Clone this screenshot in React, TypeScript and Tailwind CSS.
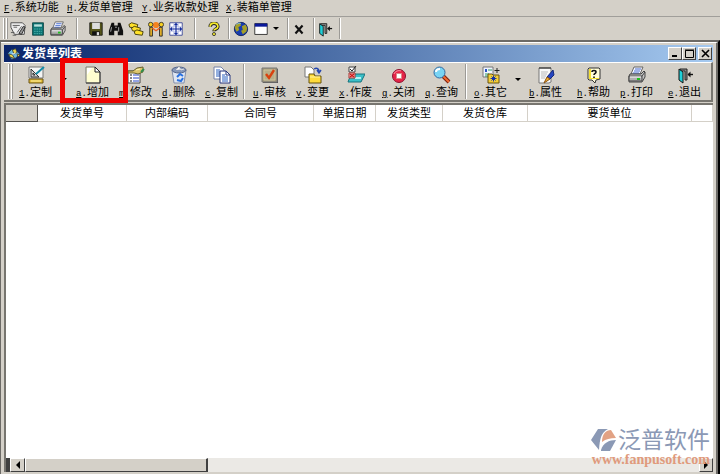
import type { ReactNode } from "react";

function Icon({ children, size = 18 }: { children: ReactNode; size?: 14 | 16 | 18 }) {
  return (
    <svg width={size} height={size} viewBox="0 0 18 18" className="shrink-0" aria-hidden="true">
      {children}
    </svg>
  );
}

// Icons shared by both toolbars
const printer = (
  <>
    <path d="M6 1h9l-3 7H3z" fill="#f4f6ff" stroke="#666" />
    <path d="M7 3h6M6 5h6M5 7h6" stroke="#4a6fd0" />
    <path d="M2 8h11l3-3 1 1v5l-3 5H1v-6z" fill="#c4c4c4" stroke="#444" />
    <path d="M1 10h13v5H1z" fill="#b0b0b0" stroke="#444" />
    <path d="M2 11h11" stroke="#fff" />
    <path d="M9 13h3" stroke="#1fc01f" strokeWidth="2" />
    <path d="M14 10l3-4" stroke="#444" />
  </>
);

const door = (
  <>
    <path d="M4 3h7v11H9V5H4z" fill="#8c8c8c" stroke="#222" />
    <path d="M3 3l4 3v11l-4-3z" fill="#20d0d8" stroke="#111" />
    <path d="M12 8.500h5" stroke="#111" strokeWidth="1.400" />
    <path d="M11.500 8.500l3-3v6z" fill="#111" />
  </>
);

const icons = {
  design: (
    <>
      <path d="M2 1h14v11H2z" fill="#f4f4f4" stroke="#777" />
      <path d="M4 3l8 8H4zM6 7v2h2z" fill="#cfcfcf" fillRule="evenodd" stroke="#333" />
      <path d="M9 8l8-7" stroke="#158ca8" strokeWidth="2" />
      <path d="M2 13h14v4H2z" fill="#e2bd3a" stroke="#6b5515" />
      <path d="M4 15h10" stroke="#fff0a0" />
    </>
  ),
  page: (
    <>
      <path d="M2 1h9l5 5v11H2z" fill="#fffed0" stroke="#777" />
      <path d="M3 2h5L3 9z" fill="#fff" />
      <path d="M11 1v5h5z" fill="#fff" stroke="#222" />
      <path d="M16 6v11H2" stroke="#333" fill="none" />
    </>
  ),
  edit: (
    <>
      <path d="M1 5h12v12H1z" fill="#fff" stroke="#444" />
      <path d="M3 9h2M3 12h2M3 15h2" stroke="#111" />
      <path d="M6 9h6M6 12h6M6 15h6" stroke="#2846c8" />
      <path d="M1 5h5l4-3 6-1v5l-5 2-4-1H1z" fill="#dcc56c" stroke="#67602c" />
      <path d="M9 4l4-1" stroke="#fff6b0" />
      <path d="M14 6l3-3" stroke="#2f8c4c" strokeWidth="2" />
    </>
  ),
  trash: (
    <>
      <path d="M2 4h14l-2 13H4z" fill="#dfe6f2" stroke="#8490ac" />
      <ellipse cx="9" cy="4" rx="7" ry="3" fill="#8798b8" stroke="#55658a" />
      <path d="M6 4l3-3 2 3 3-1" fill="#fff" stroke="#ddd" />
      <path d="M7 11l3-3 3 2M13 12l-2 3-4-1" stroke="#2870e0" strokeWidth="2" fill="none" />
    </>
  ),
  copy: (
    <>
      <path d="M1 1h7l3 3v9H1z" fill="#fff" stroke="#7482a8" />
      <path d="M3 4h4M3 6h5M3 8h5M3 10h5" stroke="#2860c0" />
      <path d="M7 5h6l4 4v8H7z" fill="#fff" stroke="#24347c" />
      <path d="M13 5v4h4" fill="none" stroke="#24347c" />
      <path d="M9 9h3M9 11h6M9 13h6M9 15h6" stroke="#2860c0" />
    </>
  ),
  audit: (
    <>
      <path d="M2 3h15v14H2z" fill="#555" />
      <path d="M1 2h15v14H1z" fill="#a59c7c" stroke="#777" />
      <path d="M3 4h11v10H3z" fill="#b8ae88" stroke="#ccc49f" />
      <path d="M5 8l3 4 5-8" fill="none" stroke="#d9420e" strokeWidth="2.400" />
    </>
  ),
  change: (
    <>
      <path d="M1 1h6l3 3v7H1z" fill="#fff" stroke="#777" />
      <path d="M10 3c3-2 5 0 5 3M13 4l2 3 2-3" fill="none" stroke="#2447b0" strokeWidth="1.500" />
      <path d="M5 8h5l1 2h6v7H5z" fill="#ffdb3b" stroke="#66520c" />
      <path d="M6 11h10" stroke="#fff4a0" />
    </>
  ),
  discard: (
    <>
      <path d="M4 8h14l-4 8H1z" fill="#3cc0c8" stroke="#16727c" />
      <path d="M8 12h6" stroke="#b6f2f4" strokeWidth="2" />
      <path d="M2 1h6v5H2z" fill="#fff" stroke="#444" />
      <path d="M3 3l2 2 4-5" stroke="#222" fill="none" />
      <path d="M2 7h6v5H2z" fill="#f6caca" stroke="#a33" />
      <path d="M3 8l4 3M7 8l-4 3" stroke="#d01818" strokeWidth="1.500" />
    </>
  ),
  stop: (
    <>
      <circle cx="9" cy="10" r="6.500" fill="#e52448" stroke="#8c1230" />
      <path d="M4 8c1-3 5-4 7-3" stroke="#ff98a8" fill="none" />
      <path d="M6.500 7.500h5v5h-5z" fill="#fff" stroke="#d88" />
    </>
  ),
  search: (
    <>
      <path d="M10 10l6 6" stroke="#7a2010" strokeWidth="4" />
      <path d="M10 10l6 6" stroke="#f26a30" strokeWidth="2" />
      <circle cx="6.500" cy="6.500" r="5.500" fill="#78d4f4" stroke="#3468a0" />
      <path d="M3 6c0-2 2-3 4-3" stroke="#fff" strokeWidth="2" fill="none" />
    </>
  ),
  other: (
    <>
      <path d="M1 1h10v10H1z" fill="#f0f4ff" stroke="#777" />
      <path d="M3 3h2v3H3z" fill="#2b55c8" />
      <path d="M6 4h4M3 8h4M3 10h3" stroke="#2f9c5c" />
      <path d="M15 2v5M12.500 4.500h5" stroke="#222" />
      <path d="M6 8h4l1 1h6v8H6z" fill="#f4ce38" stroke="#69540e" />
      <path d="M11.500 9.500v6M8.500 12.500h6M9.500 10.500l4 4M13.500 10.500l-4 4" stroke="#1434a4" />
    </>
  ),
  props: (
    <>
      <path d="M2 2h12v14l-2 1H2z" fill="#fafafa" stroke="#777" />
      <path d="M3 1v2M5 1v2M7 1v2M9 1v2M11 1v2M13 1v2" stroke="#222" />
      <path d="M4 6h7M4 8h6M4 10h5M4 12h4" stroke="#bbb" />
      <path d="M16 4l1 5-4 4-3-2z" fill="#2444c0" stroke="#152a78" />
      <path d="M10 11l3 2-6 4z" fill="#f0b030" stroke="#8a5010" />
    </>
  ),
  help: (
    <>
      <path d="M4 2h10l1 1v10l-4 1-1 3-3-3H4l-1-1V3z" fill="#fffcd8" stroke="#333" />
      <path d="M4 3h2v10H4zM5 12h9v1H5z" fill="#f4df32" />
      <path d="M7 6c0-2 4-2 4 0 0 2-2 1-2 3M9 10.500v1.500" fill="none" stroke="#111" strokeWidth="1.600" />
    </>
  ),
  form: (
    <>
      <path d="M1 2h13l3 3-1 10H5L1 7z" fill="#eee" stroke="#444" />
      <path d="M3 5h8M4 7h4M8 13l5-7" stroke="#555" />
      <path d="M10 14l5-8 2 1-4 8z" fill="#999" stroke="#222" />
      <path d="M1 13h4M3 16h4" stroke="#555" />
    </>
  ),
  calculator: (
    <>
      <path d="M2 1h14v16H2z" fill="#0c7474" stroke="#073c3c" />
      <path d="M4 3h10v3H4z" fill="#b8e0dc" />
      <path d="M4 9h10M4 12h10M4 15h10" stroke="#5bc0ba" strokeDasharray="2 1" />
    </>
  ),
  save: (
    <>
      <path d="M1 1h16v16H3l-2-2z" fill="#55551a" stroke="#111" />
      <path d="M4 1h10v8H4z" fill="#ddd" />
      <path d="M4 12h10v5H4z" fill="#111" />
      <path d="M10 13h3v4h-3z" fill="#ddd" />
    </>
  ),
  find: (
    <>
      <path d="M4 2h3v3h4V2h3l3 9v5h-6v-5H7v5H1v-5z" fill="#111" />
      <path d="M4 7l-1 5M12 7v5M8 7h2" stroke="#bbb" />
    </>
  ),
  cards: (
    <>
      <path d="M1 4l3-2 7 2-1 4-8-1z" fill="#ffe12a" stroke="#3c3608" />
      <path d="M4 8l3-2 7 2-1 4-8-1z" fill="#ffe12a" stroke="#3c3608" />
      <path d="M7 12l3-2 7 2-1 4-8-1z" fill="#ffe12a" stroke="#3c3608" />
    </>
  ),
  people: (
    <>
      <path d="M2 7h3v10H2zM13 7h3v10h-3z" fill="#e8b428" stroke="#222" />
      <path d="M5 8l4 3 4-3" stroke="#f06020" strokeWidth="1.500" fill="none" />
      <circle cx="9" cy="4.500" r="3.500" fill="#f58220" />
      <circle cx="3" cy="4" r="2.500" fill="#f8d020" stroke="#333" />
      <circle cx="15" cy="4" r="2.500" fill="#f8d020" stroke="#333" />
    </>
  ),
  move: (
    <>
      <path d="M1 1h16v16H1z" fill="#fff" stroke="#20308c" />
      <path d="M1 6h16M1 12h16M6 1v16M12 1v16" stroke="#b7c0e8" />
      <path
        d="M9 2v14M2 9h14M7 4l2-2 2 2M7 14l2 2 2-2M4 7L2 9l2 2M14 7l2 2-2 2"
        stroke="#122a9c"
        strokeWidth="1.500"
        fill="none"
      />
    </>
  ),
  question: (
    <>
      <path d="M4 6c0-6 10-6 10 0 0 3-5 3-5 6" fill="none" stroke="#222" strokeWidth="4.500" />
      <path d="M4 6c0-6 10-6 10 0 0 3-5 3-5 5" fill="none" stroke="#f4e92c" strokeWidth="2.200" />
      <circle cx="9" cy="15.500" r="2" fill="#f4e92c" stroke="#222" />
    </>
  ),
  globe: (
    <>
      <circle cx="9" cy="9" r="7.500" fill="#183cae" stroke="#10225c" />
      <path d="M3 4l5-2 1 3-3 2 1 3-3 2-2-4zM10 6l4-2 2 4-1 4-4 3-2-4 2-1z" fill="#a59f28" />
      <path d="M4 4c2-2 4-2 5-1" stroke="#8acbe8" fill="none" />
    </>
  ),
  window: (
    <>
      <path d="M1 2h16v14H1z" fill="#fff" stroke="#111" />
      <path d="M1 2h16v4H1z" fill="#0a189a" />
    </>
  ),
  cross: <path d="M5 5l8 9M13 5l-8 9" stroke="#111" strokeWidth="2.400" />,
  fish: (
    <>
      <path d="M1 8l5-5 5 1 5 4-4 6-6 2-3-4z" fill="#6cb8dc" stroke="#142850" />
      <path d="M7 4l4-2 2 5-4 2zM2 9l5 1 3 5-6-2zM13 9l4 1-3 3z" fill="#e8d74c" stroke="#333" />
      <path d="M6 9l5-1" stroke="#fff" />
    </>
  ),
  printer,
  door,
};

type IconName = keyof typeof icons;

type Action = { hotkey: string; label: string; icon: IconName };

const menus = [
  { hotkey: "F", label: "系统功能", width: "w-[63px]" },
  { hotkey: "H", label: "发货单管理", width: "w-[75px]" },
  { hotkey: "Y", label: "业务收款处理", width: "w-[84px]" },
  { hotkey: "X", label: "装箱单管理", width: "w-[75px]" },
];

const editActions: Action[] = [
  { hotkey: "m", label: "修改", icon: "edit" },
  { hotkey: "d", label: "删除", icon: "trash" },
  { hotkey: "c", label: "复制", icon: "copy" },
];

const flowActions: Action[] = [
  { hotkey: "u", label: "审核", icon: "audit" },
  { hotkey: "v", label: "变更", icon: "change" },
  { hotkey: "x", label: "作废", icon: "discard" },
  { hotkey: "g", label: "关闭", icon: "stop" },
  { hotkey: "q", label: "查询", icon: "search" },
];

const columns = [
  { label: "", width: "w-8" },
  { label: "发货单号", width: "w-[89px]" },
  { label: "内部编码", width: "w-[81px]" },
  { label: "合同号", width: "w-[106px]" },
  { label: "单据日期", width: "w-[62px]" },
  { label: "发货类型", width: "w-[67px]" },
  { label: "发货仓库", width: "w-[85px]" },
  { label: "要货单位", width: "w-[164px]" },
  { label: "", width: "" },
];

function Hotkey({ children }: { children: string }) {
  return (
    <span className="font-['Liberation_Mono',monospace] text-[9px]">
      <span className="underline">{children}</span>.
    </span>
  );
}

function Divider() {
  return <div className="w-[2px] shrink-0 self-stretch border-l border-[#9c9a96] bg-white" />;
}

function Grip() {
  return (
    <div className="flex shrink-0 gap-px self-stretch">
      <div className="w-[2px] border-r border-[#9c9a96] bg-white" />
      <div className="w-[2px] border-r border-[#9c9a96] bg-white" />
    </div>
  );
}

function Caret() {
  return <span className="block border-x-3 border-t-3 border-x-transparent border-t-black" />;
}

function SmallButton({ icon, label, size = 16 }: { icon: IconName; label: string; size?: 14 | 16 }) {
  return (
    <button aria-label={label} className="flex w-5 shrink-0 items-center justify-center">
      <Icon size={size}>{icons[icon]}</Icon>
    </button>
  );
}

function ToolButton({ hotkey, label, icon }: Action) {
  return (
    <button className="flex w-[43px] shrink-0 flex-col items-center gap-px pt-[2px]">
      <Icon>{icons[icon]}</Icon>
      <span className="leading-[14px] whitespace-nowrap">
        <Hotkey>{hotkey}</Hotkey>
        {label}
      </span>
    </button>
  );
}

function WindowButton({ label, children }: { label: string; children: ReactNode }) {
  return (
    <button
      aria-label={label}
      className="flex h-[13px] w-[14px] items-center justify-center border border-t-white border-r-[#404040] border-b-[#404040] border-l-white bg-[#d4d0c8]"
    >
      <svg width="9" height="9" viewBox="0 0 9 9" fill="none" stroke="#000">
        {children}
      </svg>
    </button>
  );
}

function MainToolbar() {
  return (
    <div className="flex h-6 items-center border-t border-[#a09e9a] px-[3px] py-px">
      <Grip />
      <div className="flex">
        <SmallButton icon="form" label="单据" />
        <SmallButton icon="calculator" label="计算器" size={14} />
        <SmallButton icon="printer" label="打印" />
      </div>
      <div className="ml-2 flex self-stretch">
        <Divider />
      </div>
      <div className="ml-2 flex">
        <SmallButton icon="save" label="保存" size={14} />
        <SmallButton icon="find" label="查找" />
        <SmallButton icon="cards" label="卡片" />
        <SmallButton icon="people" label="人员" />
        <SmallButton icon="move" label="移动" size={14} />
      </div>
      <div className="ml-2 flex self-stretch">
        <Divider />
      </div>
      <div className="ml-2 flex">
        <SmallButton icon="question" label="帮助" size={14} />
      </div>
      <div className="mr-px ml-1 flex self-stretch">
        <Divider />
      </div>
      <SmallButton icon="globe" label="网络" />
      <SmallButton icon="window" label="窗口" size={14} />
      <button aria-label="窗口列表" className="pr-2 pl-[2px]">
        <Caret />
      </button>
      <Divider />
      <SmallButton icon="cross" label="关闭" />
      <div className="ml-1 flex self-stretch">
        <Divider />
      </div>
      <SmallButton icon="door" label="退出" />
      <div className="ml-1 flex self-stretch">
        <Divider />
      </div>
    </div>
  );
}

function ListToolbar() {
  return (
    <div className="flex h-10 items-stretch border-t border-r-2 border-b-2 border-t-white border-r-[#77756f] border-b-[#77756f] bg-[#d4d0c8] py-px pl-1">
      <Grip />
      <div className="ml-px flex">
        <ToolButton hotkey="1" label="定制" icon="design" />
      </div>
      <button aria-label="定制选项" className="flex w-[14px] shrink-0 items-center justify-center pb-1">
        <Caret />
      </button>
      {/* highlighted action */}
      <div className="relative flex">
        <ToolButton hotkey="a" label="增加" icon="page" />
        <div className="pointer-events-none absolute -top-[6px] -right-[14px] -bottom-1 -left-[11px] z-10 border-5 border-[#f00000]" />
      </div>
      {editActions.map((action) => (
        <ToolButton key={action.label} {...action} />
      ))}
      <Divider />
      <div className="ml-[3px] flex">
        {flowActions.map((action) => (
          <ToolButton key={action.label} {...action} />
        ))}
      </div>
      <div className="mx-[2px] flex">
        <Divider />
      </div>
      <ToolButton hotkey="o" label="其它" icon="other" />
      <button aria-label="其它选项" className="flex w-3 shrink-0 items-center justify-center pb-1">
        <Caret />
      </button>
      <div className="flex gap-[5px]">
        <ToolButton hotkey="b" label="属性" icon="props" />
        <div className="flex">
          <ToolButton hotkey="h" label="帮助" icon="help" />
          <ToolButton hotkey="p" label="打印" icon="printer" />
        </div>
        <ToolButton hotkey="e" label="退出" icon="door" />
      </div>
    </div>
  );
}

function Watermark() {
  return (
    <div className="absolute right-[3px] -bottom-2 z-10 flex flex-col items-end gap-[2px]">
      <div className="flex items-center gap-px">
        <svg width="26" height="24" viewBox="0 0 26 24" aria-hidden="true">
          <path d="M7 1h10C10 5 9 10 8 22L0 12z" fill="#8b99b5" />
          <path d="M11 14C11 6 15 2 20 2l5 8c-6 0-10 1-14 4z" fill="#e2a284" />
          <path d="M10 22c2-7 8-10 15-10l-6 11H10z" fill="#8b99b5" />
        </svg>
        <span className="text-[23px] leading-6 text-[#8b99b5]">泛普软件</span>
      </div>
      <span className="font-['Liberation_Serif',serif] text-[14px] leading-3 font-bold text-[#e09a7c]">
        www.fanpusoft.com
      </span>
    </div>
  );
}

export default function App() {
  const raised = "border border-t-white border-r-[#404040] border-b-[#404040] border-l-white bg-[#d4d0c8]";

  return (
    <div className="flex h-screen flex-col overflow-hidden bg-[#d4d0c8] font-['Liberation_Sans','Noto_Sans_CJK_SC',sans-serif] text-[11px] text-black">
      {/* menu bar */}
      <nav className="flex h-4 items-center pl-1 leading-[14px]">
        {menus.map((menu) => (
          <button key={menu.hotkey} className={`${menu.width} shrink-0 text-left whitespace-nowrap`}>
            <Hotkey>{menu.hotkey}</Hotkey>
            {menu.label}
          </button>
        ))}
      </nav>
      <MainToolbar />
      {/* child window */}
      <div className="flex min-h-0 flex-1 flex-col border-t-2 border-r-2 border-l border-t-[#6c6a66] border-r-black border-l-[#6c6a66]">
        <main className="flex min-h-0 flex-1 flex-col border-t border-r-2 border-t-white border-r-[#6c6a66] pt-[2px] pr-[3px] pl-[3px]">
          <header className="flex h-[17px] shrink-0 items-center bg-linear-to-r from-[#0a246a] to-[#a6caf0] pr-px pl-[3px]">
            <Icon size={14}>{icons.fish}</Icon>
            <h1 className="ml-px flex-1 text-[12px] leading-4 font-bold text-white">发货单列表</h1>
            <WindowButton label="最小化">
              <path d="M1 7h5" strokeWidth="2" />
            </WindowButton>
            <WindowButton label="最大化">
              <path d="M.5 1.500h8v7h-8zM0 1h9" />
            </WindowButton>
            <div className="ml-[2px] flex">
              <WindowButton label="关闭">
                <path d="M1 1l7 7M8 1L1 8" strokeWidth="1.600" />
              </WindowButton>
            </div>
          </header>
          <ListToolbar />
          {/* list */}
          <section className="mt-px flex min-h-0 flex-1 flex-col border-t-2 border-l-2 border-[#77756f] bg-white">
            <div className="relative min-h-0 flex-1">
              <table className="w-full table-fixed border-separate border-spacing-0">
                <thead>
                  <tr className="h-[17px]">
                    {columns.map((column, i) => (
                      <th
                        key={i}
                        className={`${column.width} border-r border-b p-0 leading-4 font-normal ${i === 0 ? "border-[#55534f] bg-[#d4d0c8]" : "border-[#d4d0c8]"}`}
                      >
                        {column.label}
                      </th>
                    ))}
                  </tr>
                </thead>
                <tbody />
              </table>
              <Watermark />
            </div>
            {/* horizontal scrollbar */}
            <div className="flex h-[14px] shrink-0 bg-[#ebe9e5]">
              <div className="w-1 bg-[#404040]" />
              <button aria-label="向左滚动" className={`${raised} flex w-[15px] items-center justify-center`}>
                <span className="block border-y-4 border-r-4 border-y-transparent border-r-black" />
              </button>
              <div className={`${raised} w-[183px] border-r-2`} />
              <div className="flex-1" />
              <button aria-label="向右滚动" className={`${raised} flex w-[14px] items-center justify-center`}>
                <span className="block border-y-4 border-l-4 border-y-transparent border-l-black" />
              </button>
            </div>
          </section>
          <div className="h-[2px] shrink-0" />
        </main>
      </div>
    </div>
  );
}
